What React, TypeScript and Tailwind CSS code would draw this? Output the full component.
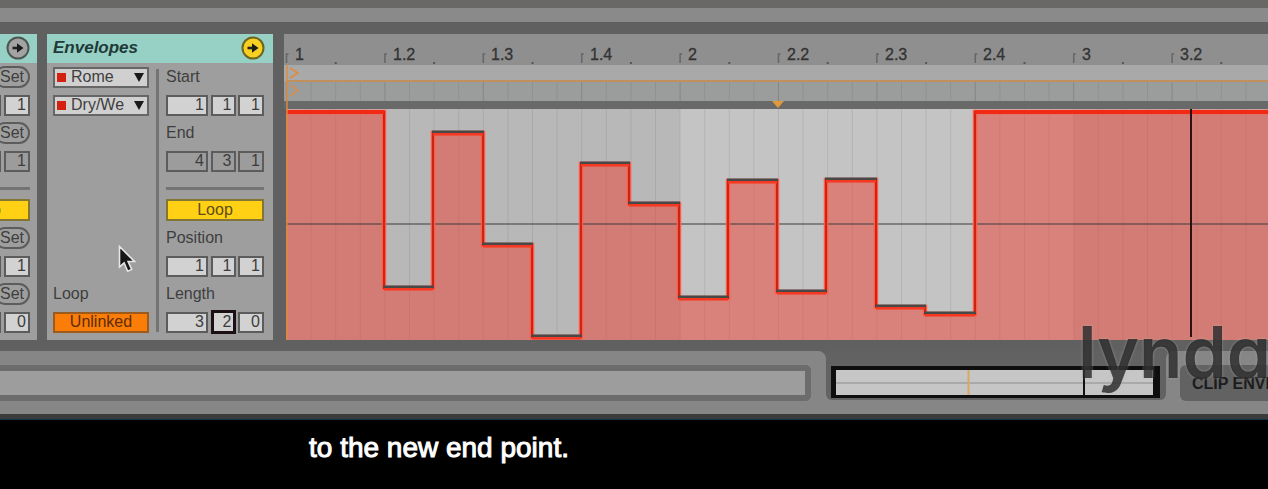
import React, { useId, useState } from "react";

const BEAT_LABELS = ["1", "1.2", "1.3", "1.4", "2", "2.2", "2.3", "2.4", "3", "3.2", "3.3", "3.4", "4", "4.2", "4.3", "4.4"];
const BEAT = 98.4;
const ORIGIN = 2.5;
const FLOOR = 306;
const FAR = 1600;

// Envelope steps as [start x, end x, level y]
const STEPS: [number, number, number][] = [
  [2, 100, 78],
  [100, 149, 254],
  [149, 199, 99],
  [199, 248, 211],
  [248, 297, 303],
  [297, 345, 130],
  [345, 395, 170],
  [395, 444, 264],
  [444, 493, 147],
  [493, 542, 258],
  [542, 592, 146],
  [592, 641, 273],
  [641, 691, 280],
  [691, FAR, 78],
];

function ArrowBadge({ active, label }: { active?: boolean; label: string }) {
  return (
    <button aria-label={label} className="block size-6 shrink-0">
      <svg viewBox="0 0 24 24" className="size-6">
        <circle cx="12" cy="12" r="10.5" fill={active ? "#f7d021" : "#a3a3a3"} stroke={active ? "#6d6420" : "#4e5654"} strokeWidth="2" />
        <path d="M6.5 12h6" stroke="#222" strokeWidth="2.6" />
        <path d="M11 7.2 17.5 12 11 16.800z" fill="#1a1a1a" />
      </svg>
    </button>
  );
}

function Field({ value, label, width, muted, focused }: { value: string; label: string; width: string; muted?: boolean; focused?: boolean }) {
  const [v, setV] = useState(value);
  return (
    <input
      aria-label={label}
      value={v}
      onChange={(e) => setV(e.target.value)}
      className={`${width} ${muted ? "bg-[#9c9c9c]" : "bg-[#d2d2d2]"} ${
        focused ? "h-6 shadow-[inset_0_0_0_3px_#1c1014]" : "h-[21px] shadow-[inset_0_0_0_2px_#5c5c5c]"
      } shrink-0 rounded-none pr-1 text-right text-base leading-5 text-[#3c3c3c] outline-none`}
    />
  );
}

function Triple({ name, values, muted, focus }: { name: string; values: string[]; muted?: boolean; focus?: number }) {
  const widths = ["w-[42px]", "w-[25px]", "w-[26px]"];
  return (
    <div role="group" aria-label={name} className="flex h-7 items-center justify-between">
      {values.map((v, i) => (
        <Field key={i} label={`${name} ${["bars", "beats", "sixteenths"][i]}`} value={v} width={widths[i]} muted={muted} focused={focus === i} />
      ))}
    </div>
  );
}

function Caption({ children }: { children: React.ReactNode }) {
  return <div className="flex h-7 items-center text-base leading-5 text-[#3e3e3e]">{children}</div>;
}

function Rule() {
  return (
    <div className="flex h-[21px] items-end pb-1.5">
      <div className="h-[3px] w-full bg-[#747474]" />
    </div>
  );
}

function Toggle({ children }: { children: React.ReactNode }) {
  return (
    <div className="flex h-7 items-center">
      <button aria-pressed="true" className="h-[22px] w-full bg-[#ffd014] text-base leading-5 text-[#5c4d12] shadow-[inset_0_0_0_2px_#837632]">
        {children}
      </button>
    </div>
  );
}

function Picker({ label, value }: { label: string; value: string }) {
  const id = useId();
  return (
    <div className="flex h-7 items-center">
      <div className="relative h-[21px] w-full">
        <label htmlFor={id} className="sr-only">
          {label}
        </label>
        <select
          id={id}
          className="block h-full w-full appearance-none rounded-none bg-[#d0d0d0] pl-[18px] text-base leading-5 text-[#3e3e3e] shadow-[inset_0_0_0_2px_#666]"
        >
          <option>{value}</option>
        </select>
        <span className="pointer-events-none absolute left-1 top-1.5 size-[9px] bg-[#d4200f]" />
        <svg viewBox="0 0 10 9" className="pointer-events-none absolute right-[5px] top-1.5 h-[9px] w-[10px]">
          <path d="M0 0h10L5 9z" fill="#1a1a1a" />
        </svg>
      </div>
    </div>
  );
}

function SetRow({ label }: { label: string }) {
  return (
    <div className="flex h-7 items-center justify-end">
      <button aria-label={label} className="h-[22px] w-9 shrink-0 rounded-full text-base leading-5 text-[#3e3e3e] shadow-[inset_0_0_0_2px_#5c5c5c]">
        Set
      </button>
    </div>
  );
}

function StripField({ name, value, muted }: { name: string; value: string; muted?: boolean }) {
  return (
    <div className="flex h-7 items-center justify-end">
      <div className="mr-[3px] h-[21px] w-6 shrink-0 border-2 border-[#5c5c5c]" />
      <Field label={name} value={value} width="w-[26px]" muted={muted} />
    </div>
  );
}

function ClipStrip() {
  return (
    <section aria-label="Clip" className="w-[37px] shrink-0 overflow-hidden bg-[#9e9e9e]">
      <header className="flex h-[29px] items-center justify-end bg-[#97d0c4] pb-0.5 pr-[7px]">
        <ArrowBadge label="Show clip" />
      </header>
      <div className="flex flex-col pr-[7px]">
        <SetRow label="Set start" />
        <StripField name="Clip start" value="1" />
        <SetRow label="Set end" />
        <StripField name="Clip end" value="1" muted />
        <Rule />
        <div className="flex justify-end">
          <div className="w-[94px] shrink-0">
            <Toggle>Loop</Toggle>
          </div>
        </div>
        <SetRow label="Set position" />
        <StripField name="Clip position" value="1" />
        <SetRow label="Set length" />
        <StripField name="Clip length" value="0" />
      </div>
    </section>
  );
}

function Pointer() {
  return (
    <svg viewBox="0 0 18 28" className="pointer-events-none absolute left-[71px] top-[211px] h-7 w-[18px]">
      <path d="M1.500 1.500V22l4.600-4.200 3.600 8.400 4-1.800-3.600-7.900H16.500z" fill="#161616" stroke="#e6e6e6" strokeWidth="1.600" />
    </svg>
  );
}

function Envelopes() {
  return (
    <section className="relative w-[226px] shrink-0 bg-[#9e9e9e]">
      <header className="flex h-[29px] items-center justify-between bg-[#97d0c4] pb-0.5 pl-1.5 pr-2">
        <h2 className="text-[17px] font-bold italic leading-5 text-[#1f3a38]">Envelopes</h2>
        <ArrowBadge active label="Show envelopes" />
      </header>
      <div className="flex pl-1.5 pr-[9px]">
        <div className="flex w-[96px] flex-col">
          <Picker label="Device" value="Rome" />
          <Picker label="Control" value="Dry/We" />
          <div className="mt-auto">
            <Caption>Loop</Caption>
            <div className="flex h-7 items-center">
              <button className="h-[21px] w-full bg-[#f97d06] text-base leading-5 text-[#5e2c08] shadow-[inset_0_0_0_2px_#9c5a1c]">Unlinked</button>
            </div>
          </div>
        </div>
        <div className="mx-[7px] mb-1 mt-1.5 w-[3px] bg-[#747474]" />
        <div className="flex min-w-0 flex-1 flex-col">
          <Caption>Start</Caption>
          <Triple name="Start" values={["1", "1", "1"]} />
          <Caption>End</Caption>
          <Triple name="End" values={["4", "3", "1"]} muted />
          <Rule />
          <Toggle>Loop</Toggle>
          <Caption>Position</Caption>
          <Triple name="Position" values={["1", "1", "1"]} />
          <Caption>Length</Caption>
          <Triple name="Length" values={["3", "2", "0"]} focus={1} />
        </div>
      </div>
      <Pointer />
    </section>
  );
}

function EnvelopeChart() {
  const outline = STEPS.map(([a, b, y], i) => `${i ? "L" : "M"}${a} ${y}L${b} ${y}`).join("");
  const area = `${outline}L${FAR} ${FLOOR}L2 ${FLOOR}Z`;
  const sixteenths = Array.from({ length: BEAT_LABELS.length * 4 }, (_, i) => ORIGIN + (i * BEAT) / 4);
  return (
    <svg role="img" aria-label="Dry/Wet envelope" className="block h-[306px] w-full overflow-hidden">
      <rect width="100%" height="31" fill="#8f8f8f" />
      <rect y="31" width="100%" height="16" fill="#a9a9a9" />
      <rect y="47" width="100%" height="20" fill="#9b9c9c" />
      <rect y="67" width="100%" height="8" fill="#696969" />
      <rect y="75" width="100%" height="231" fill="#b8b8b8" />
      <rect x="396" y="75" width="394" height="231" fill="#c4c4c4" />
      <rect x="2" y="46" width="100%" height="2" fill="#c1905c" />
      {sixteenths.map((x, i) => (
        <g key={i} stroke="#000">
          <path d={`M${x} 48V67`} strokeOpacity={i % 4 ? 0.07 : 0.14} />
          <path d={`M${x} 75V${FLOOR}`} strokeOpacity="0.08" />
          {i % 4 === 2 && <path d={`M${x} 28V30`} strokeOpacity="0.4" strokeWidth="2" />}
        </g>
      ))}
      {BEAT_LABELS.map((text, i) => {
        const x = ORIGIN + i * BEAT;
        return (
          <g key={text}>
            <path d={`M${x} 29V20h2`} fill="none" stroke="#666" strokeWidth="1.500" />
            <text x={Math.round(x + 8)} y="26" fontSize="16" fill="#333" stroke="#333" strokeWidth="0.300">
              {text}
            </text>
          </g>
        );
      })}
      <path d={area} fill="rgb(238,64,50)" fillOpacity="0.5" />
      <path d={`M2 190H${FAR}`} stroke="#3c3c3c" strokeOpacity="0.5" strokeWidth="2" />
      <path d={outline} fill="none" stroke="#ff5c48" strokeWidth="4.500" />
      <path d={outline} fill="none" stroke="#cc2414" strokeWidth="2" />
      {STEPS.map(([a, b, y]) =>
        y === 78 ? (
          <rect key={a} x={a} y="76" width={b - a} height="4" fill="#f22a14" />
        ) : (
          <React.Fragment key={a}>
            <rect x={a - 1} y={y - 2.5} width={b - a + 2} height="2.500" fill="#484848" />
            <rect x={a} y={y} width={b - a} height="2.500" fill="#f43822" />
          </React.Fragment>
        ),
      )}
      <path d="M0 75H2V306H0z" fill="#606060" />
      <path d="M3 31V306" stroke="#e08a3c" strokeWidth="2" strokeOpacity="0.7" />
      <path d="M6 34 14 39 6 44M6 51l8 5.500L6 62" fill="none" stroke="#e08a3c" strokeWidth="1.500" />
      <path d="M488 67h12l-6 7z" fill="#e09a3e" />
      <path d="M907 75V303" stroke="#2b1210" strokeWidth="2" />
    </svg>
  );
}

function Overview() {
  return (
    <svg role="img" aria-label="Clip overview" className="block h-8 w-[329px]">
      <rect width="329" height="32" fill="#0e0e0e" />
      <rect x="5" y="4" width="317" height="25" fill="#c6c6c6" />
      <path d="M5 17H322" stroke="#a9a9a9" strokeWidth="2" />
      <path d="M137.500 4V29" stroke="#dba860" strokeWidth="2" />
      <path d="M253 4V29" stroke="#111" strokeWidth="2" />
    </svg>
  );
}

function StatusBar() {
  return (
    <footer className="relative flex h-[74px] bg-[#606060] pt-[11px]">
      <div className="flex min-w-0 flex-1 items-start rounded-tr-lg bg-[#868686] pr-[15px] pt-[14px]">
        <div className="h-9 w-full rounded-r-md border-y-[6px] border-r-[6px] border-[#6c6c6c] bg-[#9d9d9d]" />
      </div>
      <div className="flex w-[340px] shrink-0 flex-col bg-[#868686]">
        <div className="h-[49px] rounded-b-md bg-[#626262] pl-[5px] pt-[15px]">
          <Overview />
        </div>
      </div>
      <div className="w-[102px] shrink-0 overflow-hidden rounded-tl-lg bg-[#868686] pl-[14px] pt-[14px]">
        <div className="flex h-9 items-center whitespace-nowrap rounded-l-md bg-[#626262] pl-3 pt-0.5 text-base font-bold leading-4 text-[#1c1c1c]">CLIP ENVELOPE</div>
      </div>
      <div className="pointer-events-none absolute -top-[33px] right-0 h-[100px] w-[190px] overflow-hidden whitespace-nowrap font-[Inter,sans-serif] text-[71px] font-semibold leading-[90px] text-[#1c1c1c]/75 [font-feature-settings:'cv11'] [text-shadow:0_0_3px_rgba(190,190,190,0.500)]">
        lynda
      </div>
    </footer>
  );
}

export default function App() {
  return (
    <div className="min-h-screen overflow-hidden bg-black font-['Liberation_Sans',Arial,sans-serif]">
      <main className="bg-[#606060]">
        <div className="h-[34px] border-b-[12px] border-t-8 border-b-[#606060] border-t-[#6a6866] bg-[#8a8a8a]" />
        <div className="flex">
          <ClipStrip />
          <div className="w-2.5 shrink-0" />
          <Envelopes />
          <div className="w-[11px] shrink-0" />
          <div className="min-w-0 flex-1">
            <EnvelopeChart />
          </div>
        </div>
        <StatusBar />
      </main>
      <div className="h-1.5 border-b border-[#123247] bg-[#3a3c3c]" />
      <p className="pl-[309px] pt-3 text-[28px] leading-8 text-white [-webkit-text-stroke:1px_white]">to the new end point.</p>
    </div>
  );
}
